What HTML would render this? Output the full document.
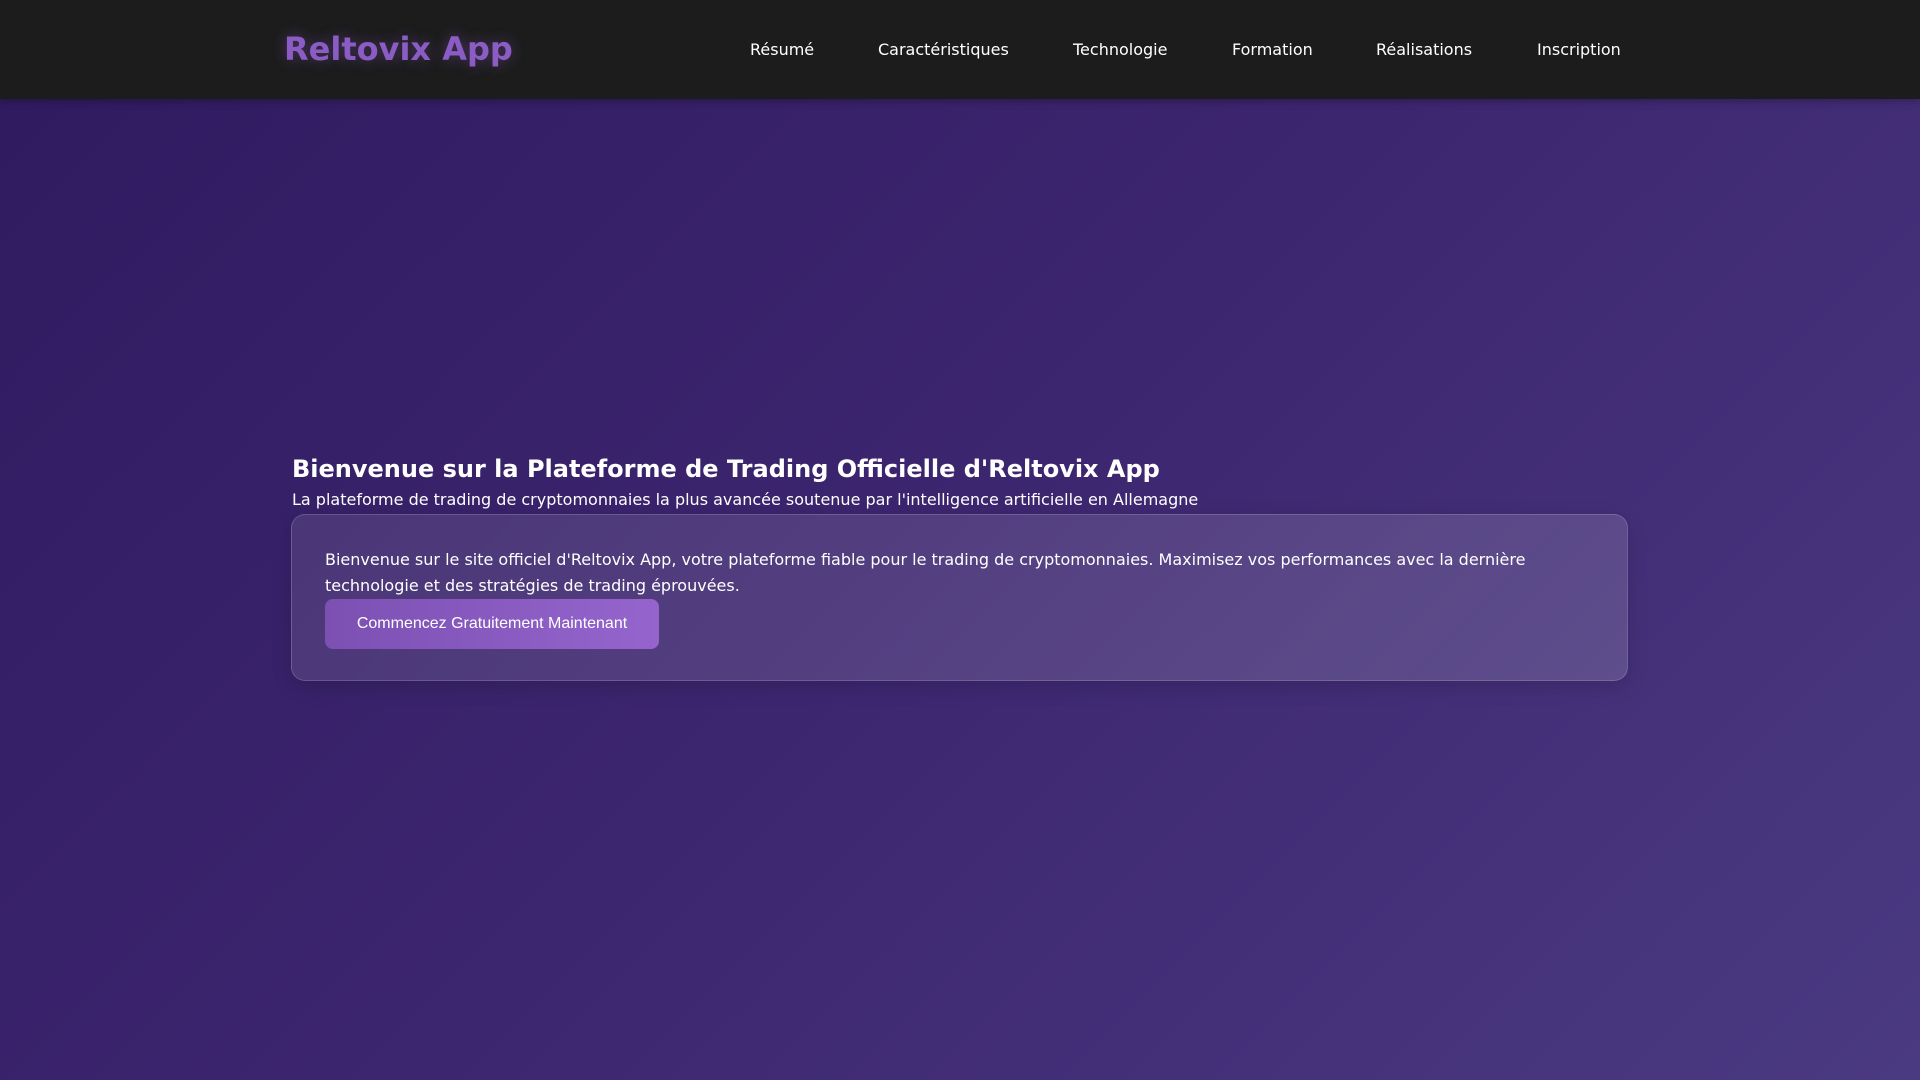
<!DOCTYPE html>
<html><head><meta charset="utf-8"><style>
*{margin:0;padding:0;box-sizing:border-box}
html,body{width:1920px;height:1080px;overflow:hidden}
body{font-family:"DejaVu Sans","Liberation Sans",sans-serif;color:#fff;background:linear-gradient(135deg,#2f1a5f 0%,#3d2670 50%,#4a3a82 100%);position:relative}
nav{position:absolute;left:0;top:0;width:1920px;height:99px;background:#1c1c1c;box-shadow:0 2px 8px rgba(0,0,0,.3)}
.logo{position:absolute;left:284px;top:27px;font-size:32px;font-weight:bold;color:#8a5cc4;text-shadow:0 0 14px rgba(138,92,196,.45);line-height:44px}
.links a{position:absolute;top:39px;font-size:16px;color:#fff;text-decoration:none;line-height:22px}
h1{position:absolute;left:292px;top:452px;font-size:24px;font-weight:bold;line-height:34px}
.sub{position:absolute;left:292px;top:489px;font-size:16px;line-height:22px}
.card{position:absolute;left:291px;top:514px;width:1337px;height:167px;border-radius:14px;background:linear-gradient(135deg,rgba(255,255,255,.1),rgba(255,255,255,.14));border:1px solid rgba(255,255,255,.16);box-shadow:0 6px 20px rgba(0,0,0,.15)}
.card p{position:absolute;left:33px;top:32px;width:1270px;font-size:16px;line-height:26px}
.btn{position:absolute;left:33px;top:84px;width:334px;height:50px;border-radius:8px;background:linear-gradient(90deg,#7c50b3,#9565cd);font-family:"Liberation Sans",sans-serif;font-size:16px;line-height:50px;text-align:center}
</style></head><body>
<nav><div class="logo">Reltovix App</div>
<div class="links">
<a style="left:750px">Résumé</a>
<a style="left:878px">Caractéristiques</a>
<a style="left:1073px">Technologie</a>
<a style="left:1232px">Formation</a>
<a style="left:1376px">Réalisations</a>
<a style="left:1537px">Inscription</a>
</div></nav>
<h1>Bienvenue sur la Plateforme de Trading Officielle d'Reltovix App</h1>
<div class="sub">La plateforme de trading de cryptomonnaies la plus avancée soutenue par l'intelligence artificielle en Allemagne</div>
<div class="card"><p>Bienvenue sur le site officiel d'Reltovix App, votre plateforme fiable pour le trading de cryptomonnaies. Maximisez vos performances avec la dernière technologie et des stratégies de trading éprouvées.</p>
<div class="btn">Commencez Gratuitement Maintenant</div></div>
</body></html>
